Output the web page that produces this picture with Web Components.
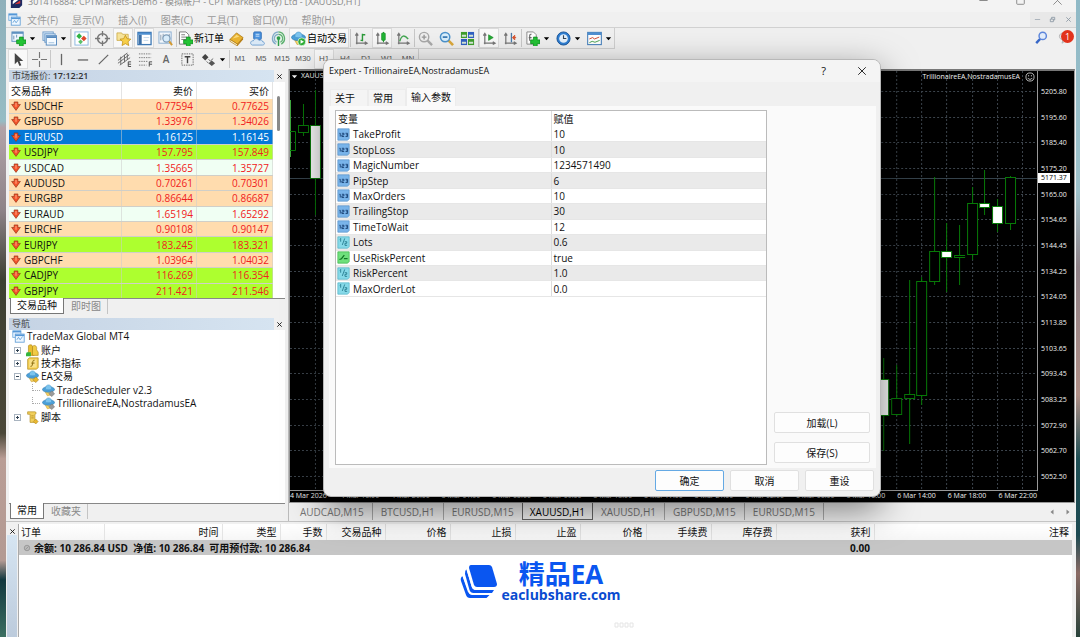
<!DOCTYPE html>
<html lang="zh-CN">
<head>
<meta charset="utf-8">
<title>XAUUSD,H1</title>
<style>
html,body{margin:0;height:100%}
body{font-family:"Open Sans","Noto Sans CJK SC",sans-serif;font-size:10px;line-height:14px;color:#111;overflow-x:hidden}
</style>
</head>
<body>
<mt-desktop></mt-desktop>
<script>
const RESET = `*{box-sizing:border-box}
button{font:inherit;color:inherit;background:none;border:0;padding:0;margin:0;cursor:default;white-space:nowrap}
a{color:inherit;text-decoration:none}
table{border-collapse:collapse;border-spacing:0}
td,th{padding:0;font-weight:inherit;text-align:left;white-space:nowrap}
`;
function component(name, css, html, setup) {
  const template = document.createElement('template');
  customElements.define(name, class extends HTMLElement {
    connectedCallback() {
      if (this.shadowRoot) return;
      const root = this.attachShadow({ mode: 'open' });
      template.innerHTML = `<style>${RESET}${css}</style>${typeof html === 'function' ? html(this) : html}`;
      root.append(template.content.cloneNode(true));
      if (setup) setup(this, root);
    }
  });
}

/* ---------- icons, all on a 16 x 16 grid ---------- */
const axes = '<path d="M3 14V3M1.500 5 3 2.500 4.500 5M2 13h11M11.500 11.500 14 13l-2.500 1.500" fill="none" stroke="#777" stroke-width="1.300"/>';
const plus = '<path d="M9 6.500h4v3h3v4h-3v3H9v-3H6v-4h3z" fill="#23c335" stroke="#0c8a1d" stroke-width=".8"/>';
const hat = '<path d="M3.500 9l3 5.500 5-1 1.500-5z" fill="#f2cf62" stroke="#c79b2c" stroke-width=".6"/><ellipse cx="8" cy="6.800" rx="7.500" ry="3.500" fill="#4a9fd8" stroke="#2f78ad" stroke-width=".6"/><path d="M4 6C4-.5 12-.5 12 6 10.500 7.600 5.500 7.600 4 6z" fill="#7cc4ee" stroke="#3b8cc4" stroke-width=".6"/>';
const ICONS = {
  app: '<path d="M2 3h12v9l-3 3H2z" fill="#1d2a62"/><path d="M4 8c3-5 7-4 8-2-3 0-4 2-8 5z" fill="#fff"/><path d="M6 11l6-4v3z" fill="#d33"/>',
  windows: '<rect x="1" y="1" width="10" height="8" fill="#eaf5ff" stroke="#68a7dd"/><path d="M1 2h10" stroke="#5496d6" stroke-width="2"/><rect x="4" y="5" width="11" height="10" fill="#eef7ff" stroke="#5b9bd5"/><path d="M4 6.500h11" stroke="#5496d6" stroke-width="2"/><path d="M6 12l2-3 2 3 3-4" fill="none" stroke="#5b9bd5"/>',
  newchart: '<rect x="1" y="1" width="12" height="10" fill="#eef6ff" stroke="#5d90c0"/><path d="M1 2h12" stroke="#5d90c0" stroke-width="2"/><path d="M3 5v4M6 4v3" stroke="#6b8fb2"/>' + plus,
  profiles: '<rect x="1" y="1" width="11" height="9" fill="#dcecfb" stroke="#6f9cc8"/><rect x="3" y="3" width="11" height="9" fill="#dcecfb" stroke="#6f9cc8"/><rect x="4.500" y="5" width="11" height="10" fill="#f6fbff" stroke="#5488bd"/><path d="M5 6.500h10" stroke="#5488bd" stroke-width="2"/><path d="M7 12.500h6" stroke="#9dbedd"/>',
  market: '<rect x="1" y="1" width="14" height="14" fill="#fff" stroke="#8ab7e0"/><path d="M5.500 2.500l3 3-3 3-3-3z" fill="#2fb344"/><path d="M10.500 5l3 3-3 3-3-3z" fill="#e0482c"/><path d="M7 9l2.500 2.500L7 14l-2.500-2.500z" fill="#5cc06b"/>',
  target: '<circle cx="8" cy="8" r="5.200" fill="none" stroke="#777" stroke-width="1.600"/><path d="M8 0v5.500M8 10.500V16M0 8h5.500M10.500 8H16" stroke="#777" stroke-width="1.400"/>',
  star: '<path d="M1 2h5l1 1.500h6V10H1z" fill="#f6e39a" stroke="#c9a53d" stroke-width=".8"/><path d="M10 4.500l1.800 3.700 4 .5-3 2.800.8 4-3.600-2-3.600 2 .8-4-3-2.800 4-.5z" fill="#f7cf4a" stroke="#c08f16" stroke-width=".8"/>',
  nav: '<rect x="1" y="1.500" width="14" height="13" fill="#fff" stroke="#3f79b4" stroke-width="1.400"/><path d="M1 3h14" stroke="#4d8fd0" stroke-width="2"/><rect x="2" y="4" width="3" height="10" fill="#3b6ea5"/><path d="M7 7h6M7 10h5" stroke="#c4d8ea"/>',
  tester: '<rect x="1" y="1" width="13" height="12" fill="#f3f8fd" stroke="#88acd0"/><path d="M3 4v6M5.500 3v5M12 3v5" stroke="#8a9bad"/><circle cx="9" cy="8" r="3.800" fill="#d8ecfa" stroke="#7d9cb8" stroke-width="1.300"/><path d="M12 11l3 4" stroke="#d39a33" stroke-width="2.200"/>',
  order: '<path d="M1.500 1h7l3 3v10h-10z" fill="#fff" stroke="#777"/><path d="M3.500 4h4M3.500 6.500h6M3.500 9h5" stroke="#777"/>' + plus,
  book: '<path d="M1 9l7-7 7 5-6 7z" fill="#e9b22f" stroke="#a9740c" stroke-width=".8"/><path d="M1 9l8 5v2l-8-5z" fill="#fff3cc" stroke="#a9740c" stroke-width=".7"/><path d="M9 14l6-7v2l-6 7z" fill="#b77d13"/><path d="M4 8l4-4 3 2z" fill="#f9d97a"/>',
  cloud: '<rect x="4" y="1" width="8" height="8" rx="1" fill="#4a93e0" stroke="#2c6bb5"/><path d="M6 3.500h4M6 5.500h4" stroke="#cfe4f8"/><path d="M2.500 15c-3-1-2-5 1-4.500 1-3 5-3 6-.5 2-1 4 0 4 1.500 3 .5 2 3.500 0 3.500z" fill="#d9e8f6" stroke="#6f9fd0"/>',
  signal: '<circle cx="8" cy="8" r="7" fill="#e5f1e9"/><path d="M8 1a7 7 0 0 0-3 13M8 3.500a4.500 4.500 0 0 0-2 8.500" fill="none" stroke="#80a9c9" stroke-width="1.300"/><path d="M8 1a7 7 0 0 1 3 13M8 3.500a4.500 4.500 0 0 1 2 8.500" fill="none" stroke="#5cb06e" stroke-width="1.300"/><circle cx="8" cy="7.500" r="2" fill="#2f9c49"/><path d="M8 8v8" stroke="#2f9c49" stroke-width="1.500"/>',
  auto: hat + '<circle cx="11.500" cy="11.500" r="4.200" fill="#2fae38" stroke="#fff" stroke-width=".7"/><path d="M10.200 9.300l3.600 2.200-3.600 2.200z" fill="#fff"/>',
  bars: axes + '<path d="M9 3v8M9 4h3M7 10h2" stroke="#2c9b3b" stroke-width="1.500"/>',
  candles: axes + '<path d="M9 1v11" stroke="#148a22"/><rect x="7" y="2" width="4" height="8" rx="1" fill="#21b534" stroke="#148a22" stroke-width=".6"/>',
  line: axes + '<path d="M4 11C6 4 9 4 13 8.500" fill="none" stroke="#43a651" stroke-width="1.500"/>',
  zoomin: '<path d="M10 10l5 5" stroke="#aaa" stroke-width="2.500"/><circle cx="6.500" cy="6.500" r="5" fill="#efefef" stroke="#a8a8a8" stroke-width="1.500"/><path d="M6.500 4v5M4 6.500h5" stroke="#999" stroke-width="1.500"/>',
  zoomout: '<path d="M10 10l5 5" stroke="#dba83b" stroke-width="2.800"/><circle cx="6.500" cy="6.500" r="5" fill="#d9effc" stroke="#4c93cc" stroke-width="1.600"/><path d="M4 6.500h5" stroke="#2c6fae" stroke-width="1.700"/>',
  tiles: '<rect x="1" y="1" width="6.500" height="6.500" fill="#3f9e2c"/><rect x="8.500" y="1" width="6.500" height="6.500" fill="#2f5fc2"/><rect x="1" y="8.500" width="6.500" height="6.500" fill="#2f5fc2"/><rect x="8.500" y="8.500" width="6.500" height="6.500" fill="#3f9e2c"/><path d="M2 5h4.500M9.500 5H14M2 12.500h4.500M9.500 12.500H14" stroke="#d5e6d8" stroke-width="2"/>',
  scroll: axes + '<path d="M7 4v6l5-3z" fill="#25ab36" stroke="#14861f" stroke-width=".6"/>',
  shift: axes + '<path d="M9 2v10" stroke="#4b7ba8" stroke-width="1.400"/><path d="M14 7h-3M12.500 4.500 10 7l2.500 2.500z" fill="#d8552f" stroke="#d8552f"/>',
  indicator: '<path d="M2 1h7l3 3v10H2z" fill="#fff" stroke="#8a8a8a"/><path d="M7 3.500c-2-.5-2 1-2 3v4M4 7h3" fill="none" stroke="#666" stroke-width="1.200"/>' + plus,
  clock: '<circle cx="8" cy="8" r="7" fill="#2f7fd3" stroke="#1b5599"/><circle cx="8" cy="8" r="4.600" fill="#e6f2fc"/><path d="M8 4.500V8h3" fill="none" stroke="#345" stroke-width="1.200"/>',
  template: '<rect x=".7" y="1.500" width="14.600" height="13" fill="#fff" stroke="#4f86bf" stroke-width="1.200"/><path d="M1 3h14" stroke="#4f90d2" stroke-width="2.500"/><path d="M2.500 8.500 6 7l2 1.500 5-2" stroke="#d0452d" fill="none"/><path d="M2.500 12.500l3-1.500 3 1 5-2" stroke="#45a14c" fill="none"/>',
  cursor: '<path d="M4 1v12l3-3 2 5 2-1-2-4.500h4z" fill="#444"/>',
  cross: '<path d="M8 0v6.500M8 9.500V16M0 8h6.500M9.500 8H16" stroke="#777" stroke-width="1.200"/>',
  vline: '<path d="M8 2v12" stroke="#666" stroke-width="1.400"/>',
  hline: '<path d="M3 8.500h11" stroke="#666" stroke-width="1.400"/>',
  trend: '<path d="M3 13 13 3" stroke="#666" stroke-width="1.300"/>',
  channel: '<path d="M1 9l10-8M1 12 13 3M3 14l11-8M4 5v8M8 3v8M11 2v6" stroke="#666"/><path d="M15 10.500h-3v5h3M12 13h3" stroke="#444" fill="none"/>',
  fibo: '<path d="M1 2h13M1 6h13M1 10h9M1 14h8" stroke="#777" stroke-dasharray="1.500 1"/><path d="M15 10.500h-3v5M12 13h3" stroke="#444" fill="none"/>',
  label: '<rect x="2" y="2" width="12" height="12" fill="none" stroke="#666" stroke-dasharray="1.500 1"/><path d="M5 5h6M8 5v7" stroke="#444" stroke-width="1.500"/>',
  arrows: '<path d="M4.500 2 8 5.500 4.500 9 1 5.500z" fill="#444"/><path d="M8 8l2 1.500L13 7M6 10l2 2" fill="none" stroke="#666"/><path d="M11.500 9 15 12l-3.500 3L8 12z" fill="#555"/>',
  search: '<path d="M6.500 9.500 1.500 15" stroke="#3767c7" stroke-width="3"/><circle cx="9.500" cy="6" r="4.500" fill="#e2ecfa" stroke="#5d86db" stroke-width="1.800"/>',
  chat: '<path d="M8 2c9 0 8 9 2 9.500L5 15l1-4C0 10 0 2 8 2z" fill="#e3e3e8" stroke="#aaa"/>',
  down: '<path d="M5 1.500h6v4h4L8 15 1 5.500h4z" fill="#f3532b" stroke="#8e2c12"/><path d="M7 3h2v6H7z" fill="#ff9b75"/>',
  accounts: '<path d="M3 2c2-2 5-1 5 1v5l2 2v4H3z" fill="#e8bd2f" stroke="#a67c10" stroke-width=".7"/><path d="M8 3c3-3 6 0 5 4l2 3v4H8z" fill="#f1cb45" stroke="#a67c10" stroke-width=".7"/><path d="M1 10h5v5H0v-3z" fill="#33b53c"/>',
  fx: '<path d="M2 3l2-2h11v12l-2 2H2z" fill="#f3cd4e" stroke="#b08a1e" stroke-width=".8"/><rect x="4" y="3" width="9" height="10" fill="#f9e18a"/><path d="M10.500 4C8 3.500 8.500 6 8 8.500S7 12 5.500 11.500M6.500 7.500h4" stroke="#8a6a0c" fill="none" stroke-width="1.200"/>',
  hat: hat + '<path d="M12 8.500l3.500 3.500-3.500 3.500L8.500 12z" fill="#e9b832" stroke="#a97f14" stroke-width=".7"/>',
  hatgrey: hat + '<path d="M12 8.500l3.500 3.500-3.500 3.500L8.500 12z" fill="#9a9a9a" stroke="#777" stroke-width=".7"/>',
  script: '<path d="M2 1h9c2 0 2 3 0 3v7h2v3H5V4H2z" fill="#f1cf5b" stroke="#b08a1e" stroke-width=".8"/><path d="M6.500 6h3M6.500 8.500h3" stroke="#b08a1e"/><path d="M12 10l3 3-3 3-3-3z" fill="#e9b832" stroke="#a97f14" stroke-width=".6"/>',
  int: '<path d="M1 1h14v12l-2 2H1z" fill="#79b4ea" stroke="#5590c8" stroke-width=".8"/><path d="M3 6.500h1v4M6 6.500h2.500v2H6v2h2.800M10.500 6.500H13v4h-2.500M11 8.500h2" stroke="#163f72" fill="none" stroke-width="1.100"/>',
  double: '<path d="M1 1h14v12l-2 2H1z" fill="#86d9e8" stroke="#4bb2c6" stroke-width=".8"/><path d="M3.500 4l1-1v4M6.500 11l3-8M9.500 7h2.500v2H9.800v2.500H12.500" stroke="#1d7487" fill="none"/>',
  bool: '<path d="M1 1h14v12l-2 2H1z" fill="#6fe07c" stroke="#36b146" stroke-width=".8"/><path d="M3 10.500l2.500-1L9 5M8.500 9.500H13" stroke="#0f7423" fill="none" stroke-width="1.500"/>',
  smile: '<circle cx="8" cy="8" r="6.500" fill="none" stroke="#ddd" stroke-width="1.300"/><path d="M4.500 9.500c1 3 6 3 7 0" fill="none" stroke="#ddd" stroke-width="1.300"/><path d="M5.800 5v2M10.200 5v2" stroke="#ddd" stroke-width="1.400"/>',
  noentry: '<circle cx="8" cy="8" r="5.500" fill="#b8b8b8" stroke="#888" stroke-width="1.300"/><path d="M5 11l6-6" stroke="#888" stroke-width="1.300"/>',
  close: '<path d="M3 3l10 10M13 3 3 13" stroke="currentColor" stroke-width="2"/>',
  thinclose: '<path d="M2 2l12 12M14 2 2 14" stroke="currentColor" stroke-width="1.400"/>',
  min: '<path d="M2 8h12" stroke="currentColor" stroke-width="1.500"/>',
  max: '<rect x="2.500" y="2.500" width="11" height="11" rx="1" fill="none" stroke="currentColor" stroke-width="1.400"/>',
  restore: '<path d="M3 7h7v6H3zM6 7V3h7v6h-3" fill="none" stroke="currentColor" stroke-width="2"/>',
  caret: '<path d="M2 5h12l-6 7z" fill="currentColor"/>',
  left: '<path d="M11 3v10L5 8z" fill="currentColor"/>',
  right: '<path d="M5 3v10l6-5z" fill="currentColor"/>'
};
component('mt-icon',
  ':host{display:inline-block;flex:none;width:var(--size,15px);height:var(--size,15px)}svg{display:block;width:100%;height:100%}',
  el => `<svg viewBox="0 0 16 16" aria-hidden="true">${ICONS[el.getAttribute('name')] || ''}</svg>`);

/* ---------- toolbar pieces ---------- */
component('tool-button', `
:host{display:block;flex:none}
button{display:flex;align-items:center;justify-content:center;gap:2px;min-width:20px;height:20px}
:host([menu]) button{width:30px;gap:3px}
:host([labelled]) button{gap:1px;padding:0 1px;font-size:10px;color:#000}
:host([pressed]) button{background:#f9f9f9;border:1px solid #dcdcdc}
:host([period]) button{font:8px/10px "Liberation Sans",sans-serif;color:#555}
.caret{--size:7px;color:#000}`,
  el => `<button type="button" aria-label="${el.getAttribute('icon') || ''}">${el.getAttribute('icon') ? `<mt-icon name="${el.getAttribute('icon')}"></mt-icon>` : ''}<slot></slot>${el.hasAttribute('menu') ? '<mt-icon class="caret" name="caret"></mt-icon>' : ''}</button>`,
  (el, root) => { if (!el.getAttribute('icon')) root.querySelector('button').removeAttribute('aria-label'); });
component('tool-sep', ':host{display:block;flex:none;width:1px;height:18px;margin-right:-1px;background:#c8c8c8}', '');

const T = (icon, flags = '', text = '') => `<tool-button icon="${icon}" ${flags}>${text}</tool-button>`;
const S = '<tool-sep></tool-sep>';
component('mt-toolbars', `
:host{display:flex;justify-content:space-between;align-items:flex-start;background:#f0f0f0;height:41px}
.rows{display:flex;flex-direction:column;align-items:flex-start}
.row{display:flex;gap:1px;align-items:center;height:21px;padding-left:2px;border-bottom:1px solid #cfcfcf;border-right:1px solid #cfcfcf}
.row+.row{height:20px;border-bottom:0}
.letter{font-size:10px;font-weight:600;color:#666}
.status{display:flex;gap:10px;padding:3px 5px 0 0;--size:13px}
.status button{position:relative;display:block}
.badge{position:absolute;left:3px;top:-1px;width:13px;height:13px;border-radius:50%;background:#e2331c;color:#fff;font-size:9px;line-height:13px;text-align:center}`,
  `<div class="rows">
  <div class="row">${T('newchart', 'menu')}${T('profiles', 'menu')}${S}${T('market', 'pressed')}${T('target')}${T('star', 'pressed')}${T('nav', 'pressed')}${T('tester')}${S}${T('order', 'labelled', '新订单')}${T('book')}${T('cloud')}${T('signal')}${T('auto', 'labelled pressed', '自动交易')}${S}${T('bars')}${T('candles', 'pressed')}${T('line')}${S}${T('zoomin')}${T('zoomout')}${T('tiles')}${S}${T('scroll', 'pressed')}${T('shift')}${S}${T('indicator', 'menu')}${T('clock', 'menu')}${T('template', 'menu')}</div>
  <div class="row">${T('cursor', 'pressed')}${T('cross')}${S}${T('vline')}${T('hline')}${T('trend')}${T('channel')}${T('fibo')}<tool-button><span class="letter">A</span></tool-button>${T('label')}${T('arrows', 'menu')}${S}${['M1', 'M5', 'M15', 'M30', 'H1', 'H4', 'D1', 'W1', 'MN'].map(p => `<tool-button period ${p === 'H1' ? 'pressed' : ''}>${p}</tool-button>`).join('')}</div>
</div>
<div class="status"><button type="button" aria-label="search"><mt-icon name="search"></mt-icon></button><button type="button"><mt-icon name="chat"></mt-icon><span class="badge">1</span></button></div>`);

component('mt-titlebar', `
:host{display:flex;align-items:flex-end;height:12px;overflow:hidden;background:#f3f3f3;color:#8a8a8a}
.bar{flex:1;display:flex;align-items:center;height:21px;padding:0 13px 0 3px;gap:4px}
.title{flex:1;white-space:nowrap;font-size:9px}
.ctl{display:flex;gap:26px;--size:11px}`,
  `<div class="bar"><mt-icon name="app"></mt-icon><span class="title">301416884: CPTMarkets-Demo - 模拟帐户 - CPT Markets (Pty) Ltd - [XAUUSD,H1]</span>
  <span class="ctl"><button type="button" aria-label="minimize"><mt-icon name="min"></mt-icon></button><button type="button" aria-label="maximize"><mt-icon name="max"></mt-icon></button><button type="button" aria-label="close"><mt-icon name="thinclose"></mt-icon></button></span></div>`);

component('mt-menubar', `
:host{display:flex;align-items:center;height:16px;background:#f0f0f0;border-bottom:1px solid #d2d2d2;color:#999;padding-left:2px}
nav{flex:1;display:flex;gap:14px;margin-left:6px;white-space:nowrap}
mt-icon{--size:13px}
.mdi{display:flex;align-self:stretch;align-items:center;justify-content:space-around;width:46px;background:#e8e8e8;color:#8d99a5}
.mdi mt-icon{--size:7px}`,
  `<mt-icon name="windows"></mt-icon><nav>${['文件(F)', '显示(V)', '插入(I)', '图表(C)', '工具(T)', '窗口(W)', '帮助(H)'].map(t => `<a href="#">${t}</a>`).join('')}</nav>
  <div class="mdi"><mt-icon name="min"></mt-icon><mt-icon name="restore"></mt-icon><mt-icon name="close"></mt-icon></div>`);

/* ---------- docked panels ---------- */
component('dock-panel', `
:host{display:flex;flex-direction:column}
header{display:flex;height:12px;align-items:center}
.title{flex:1;height:12px;line-height:12px;padding-left:3px;background:linear-gradient(90deg,#c5d3e4,#d6e4f1);color:#444;white-space:nowrap;font-size:9px}
.title b{font-weight:600;color:#333}
header button{width:11px;height:12px;display:grid;place-items:center}
header mt-icon{--size:7px}
.body{flex:1;background:#fff;border-bottom:1px solid #888;overflow:hidden}
footer{display:flex;height:17px;align-items:flex-start}
footer button{height:15px;padding:0 6px;color:#888;border-right:1px solid #c4c4c4;line-height:13px}
footer button:first-child{background:#fff;color:#111;border:1px solid #777;border-top:0;margin:-1px 1px 0 1px;height:16px;line-height:15px}`,
  el => `<header><div class="title">${el.getAttribute('heading')}</div><button type="button" aria-label="close"><mt-icon name="close"></mt-icon></button></header>
  <div class="body"><slot></slot></div>
  <footer>${el.getAttribute('tabs').split('|').map(t => `<button type="button">${t}</button>`).join('')}</footer>`);

const QUOTES = [
  ['USDCHF', '0.77594', '0.77625', 'o'], ['GBPUSD', '1.33976', '1.34026', 'o'], ['EURUSD', '1.16125', '1.16145', 's'],
  ['USDJPY', '157.795', '157.849', 'g'], ['USDCAD', '1.35665', '1.35727', 'm'], ['AUDUSD', '0.70261', '0.70301', 'o'],
  ['EURGBP', '0.86644', '0.86687', 'o'], ['EURAUD', '1.65194', '1.65292', 'm'], ['EURCHF', '0.90108', '0.90147', 'o'],
  ['EURJPY', '183.245', '183.321', 'g'], ['GBPCHF', '1.03964', '1.04032', 'o'], ['CADJPY', '116.269', '116.354', 'g'],
  ['GBPJPY', '211.421', '211.546', 'g']];
component('market-watch', `
:host{display:flex;justify-content:space-between;height:100%}
table{flex:1;height:217px;table-layout:fixed}
th,td{border-right:1px solid #ccc8;line-height:12px;padding:0 3px}
th:first-child,td:first-child{padding-left:2px}
th:not(:first-child),td:not(:first-child){text-align:right}
thead tr{height:17px}
tbody td{border-bottom:1px solid #d0cfc8;color:#f02020}
tbody td:first-child{color:#111}
.o{background:#ffdcae}.g{background:#adff2f}.m{background:#f0fff3}.s{background:#0478d7}
.s td,.s td:first-child{color:#fff}
.sym{display:flex;align-items:center;gap:3px}
.sym mt-icon{--size:10px}
.track{width:12px;padding:14px 4px 0}
.thumb{width:3px;height:35px;background:#8a8a8a;border-radius:2px}`,
  `<table><colgroup><col><col style="width:75px"><col style="width:76px"></colgroup><thead><tr><th>交易品种</th><th>卖价</th><th>买价</th></tr></thead><tbody>${QUOTES.map(q => `<tr class="${q[3]}"><td><span class="sym"><mt-icon name="down"></mt-icon>${q[0]}</span></td><td>${q[1]}</td><td>${q[2]}</td></tr>`).join('')}</tbody></table><div class="track"><div class="thumb"></div></div>`);

component('nav-tree', `
:host{display:block}
ul{list-style:none;margin:0;padding:0 0 0 3px;display:grid;grid-auto-rows:1fr;height:94px}
li{display:flex;align-items:center;gap:2px;line-height:13px;white-space:nowrap}
mt-icon{--size:13px}
.box{width:7px;height:7px;border:1px solid #a9b4c0;margin:0 3px 0 2px;display:grid;place-items:center;background:#fff;position:relative;color:#345}
.box::before{content:"";width:3px;height:1px;background:currentColor}
.plus::after{content:"";position:absolute;left:2px;top:1px;width:1px;height:3px;background:currentColor}
.branch{width:8px;height:7px;margin:-6px 0 0 20px;border-left:1px dotted #aaa;border-bottom:1px dotted #aaa}`,
  `<ul><li><mt-icon name="windows"></mt-icon>TradeMax Global MT4</li>
  <li><span class="box plus"></span><mt-icon name="accounts"></mt-icon>账户</li>
  <li><span class="box plus"></span><mt-icon name="fx"></mt-icon>技术指标</li>
  <li><span class="box"></span><mt-icon name="hat"></mt-icon>EA交易</li>
  <li><span class="branch"></span><mt-icon name="hatgrey"></mt-icon>TradeScheduler v2.3</li>
  <li><span class="branch"></span><mt-icon name="hatgrey"></mt-icon>TrillionaireEA,NostradamusEA</li>
  <li><span class="box plus"></span><mt-icon name="script"></mt-icon>脚本</li></ul>`);

/* ---------- price chart ---------- */
/* x, wick top, body top, body bottom, wick bottom, filled */
const CANDLES = [
  [13, 33, 54, 61, 65, 0], [25, 19, 54, 107, 144, 1], [594, 287, 308, 344, 380, 1], [607, 294, 327, 343, 345, 0],
  [620, 209, 323, 327, 373, 0], [632, 206, 210, 324, 334, 0], [645, 106, 180, 210, 214, 0], [657, 152, 180, 186, 221, 1],
  [670, 154, 184, 186, 214, 0], [683, 116, 132, 183, 189, 0], [695, 99, 132, 136, 144, 1], [708, 128, 135, 152, 161, 1],
  [721, 105, 106, 152, 159, 0]];
function chartDrawing() {
  let out = '<g stroke="#3c444c" stroke-dasharray="2 2">';
  for (let i = 0; i < 29; i++) out += `<path d="M${Math.round(25 + i * 25.29) + .5} 0V419"/>`;
  for (let i = 0; i < 16; i++) out += `<path d="M0 ${Math.round(20 + i * 25.67) + .5}H748"/>`;
  out += '</g><path d="M0 107.500H748" stroke="#35424b"/><g stroke="#077a07">';
  out += '<path d="M.5 29V86" stroke="#3fae3f"/><path d="M0 60.500h5.500v19H0" fill="none"/><path d="M33.500 100v16"/>';
  for (const [x, t, a, b, l, f] of CANDLES)
    out += `<path d="M${x + .5} ${t}V${l}"/><rect x="${x - 4.5}" y="${a + .5}" width="10" height="${b - a}" fill="${f ? '#fff' : '#000'}"/>`;
  return out + '</g>';
}
const PRICES = ['5205.80', '5195.60', '5185.40', '5175.20', '5165.00', '5154.65', '5144.45', '5134.25', '5124.05', '5113.85', '5103.65', '5093.45', '5083.25', '5072.90', '5062.70', '5052.50'];
const TIMES = ['4 Mar 2026', '4 Mar 16:00', '4 Mar 20:00', '5 Mar 01:00', '5 Mar 05:00', '5 Mar 09:00', '5 Mar 13:00', '5 Mar 17:00', '5 Mar 21:00', '6 Mar 02:00', '6 Mar 06:00', '6 Mar 10:00', '6 Mar 14:00', '6 Mar 18:00', '6 Mar 22:00'];
component('price-chart', `
:host{display:grid;grid-template-columns:minmax(0,1fr) 36px;grid-template-rows:420px 11px;background:#000;color:#f0f0f0;border:1px solid #999;border-top:2px solid #777;border-bottom:0;font-size:7px;line-height:10px}
.plot{position:relative;border-right:1px solid #999;border-bottom:1px solid #999}
svg{display:block;width:100%;height:100%}
.name,.ea{position:absolute;top:0;display:flex;align-items:center;gap:3px;white-space:nowrap}
.name{left:1px}.name mt-icon{--size:7px}
.ea{right:2px;top:1px;gap:5px}.ea mt-icon{--size:10px}
.prices{position:relative;display:grid;grid-auto-rows:1fr;padding:8px 0 1px 3px;align-items:center}
.now{position:absolute;left:0;top:102px;padding:0 0 0 3px;width:32px;background:#fff;color:#000}
.times{grid-column:1/-1;display:grid;grid-template-columns:repeat(15,minmax(0,1fr));margin-right:25px;white-space:nowrap}`,
  `<div class="plot"><svg viewBox="0 0 748 419" preserveAspectRatio="none">${chartDrawing()}</svg>
  <span class="name"><mt-icon name="caret"></mt-icon>XAUUSD,H1</span><span class="ea">TrillionaireEA,NostradamusEA<mt-icon name="smile"></mt-icon></span></div>
  <div class="prices">${PRICES.map(p => `<span>${p}</span>`).join('')}<span class="now">5171.37</span></div>
  <div class="times">${TIMES.map(t => `<span>${t}</span>`).join('')}</div>`);

component('chart-tabs', `
:host{display:flex;justify-content:space-between;height:19px;background:#f0f0f0;border-top:1px solid #999;padding:0 3px}
.tabs{display:flex;align-items:flex-start}
button{height:17px;padding:0 8px;color:#777;border-right:1px solid #aaa}
button.active{background:#f3f3f3;color:#000;border:1px solid #666;border-top:0;margin-left:-1px;padding:1px 7px 0}
.arrows{display:flex;gap:8px;align-items:center;color:#888;--size:8px}`,
  `<div class="tabs">${['AUDCAD,M15', 'BTCUSD,H1', 'EURUSD,M15', '*XAUUSD,H1', 'XAUUSD,H1', 'GBPUSD,M15', 'EURUSD,M15'].map(t => `<button type="button" class="${t[0] === '*' ? 'active' : ''}">${t.replace('*', '')}</button>`).join('')}</div>
  <div class="arrows"><mt-icon name="left"></mt-icon><mt-icon name="right"></mt-icon></div>`);

/* ---------- terminal ---------- */
const COLUMNS = [['订单', 85], ['时间', 118], ['类型', 58], ['手数', 46], ['交易品种', 59], ['价格', 65], ['止损', 65], ['止盈', 65], ['价格', 66], ['手续费', 65], ['库存费', 65], ['获利', 98], ['注释', 0]];
component('mt-terminal', `
:host{display:grid;grid-template-columns:12px minmax(0,1fr);background:#f0f0f0;border-top:1px solid #c4c4c4;padding:2px 4px 0 0}
.side{display:flex;flex-direction:column;align-items:center}
.side button{height:11px}.side mt-icon{--size:7px}
.strip{flex:1;width:10px;background:linear-gradient(#d6e5f2,#bccbdc)}
.body{background:#fff;border-left:1px solid #aaa}
table{width:100%;table-layout:fixed}
th{height:16px;text-align:right;padding:0 3px 0 0;border-right:1px solid #e4e4e4;background:linear-gradient(#fff,#f6f6f6)}
th:first-child{text-align:left;padding-left:2px}
th:last-child{border:0}
td{height:15px;background:#c6c6c6;font-weight:700;font-size:10px;line-height:14px;text-align:right;padding-right:4px;white-space:pre}
td:first-child{text-align:left;padding-left:4px}
td span{display:flex;align-items:center;gap:3px}
td mt-icon{--size:8px}
.brand{display:flex;justify-content:center;align-items:center;gap:4px;margin:5px 10px 0 0;color:#0a56f0}
.brand svg{width:37px;height:34px}
.brand div{display:flex;flex-direction:column;align-items:center}
.brand strong{font-size:26px;line-height:28px}
.brand a{font-size:14px;line-height:14px;font-weight:700;color:#0a4bd0}
.mark{display:block;width:20px;height:6px;margin:20px auto 0;position:relative;left:78px;opacity:.5}`,
  `<div class="side"><button type="button" aria-label="close"><mt-icon name="close"></mt-icon></button><div class="strip"></div></div>
  <div class="body"><table><colgroup>${COLUMNS.map(c => `<col${c[1] ? ` style="width:${c[1]}px"` : ''}>`).join('')}</colgroup>
  <thead><tr>${COLUMNS.map(c => `<th>${c[0]}</th>`).join('')}</tr></thead>
  <tbody><tr><td colspan="5"><span><mt-icon name="noentry"></mt-icon>余额: 10 286.84 USD  净值: 10 286.84  可用预付款: 10 286.84</span></td><td colspan="7">0.00</td><td></td></tr></tbody></table>
  <div class="brand"><svg viewBox="0 0 37 34" aria-hidden="true"><g fill="#0a56f0"><path d="M11 1h18q2 0 3 2l5 17q0 3-3 3H17q-2 0-3-2L9 4q0-3 2-3z"/><path d="M6.500 5l5 17q1 4 4.500 4h18l-2 3H13.500q-3 0-4-3L5 10q-.5-3 1.500-5z"/><path d="M2.500 12l6 15.500q1 3.500 4 3.500h17l-3 3H10q-3 0-4-3L1 17q-1-3 1.500-5z"/></g><path d="M6.800 4.500l5.500 18q.8 2.700 3.700 2.700h20M3 11.500l5.500 16q1 2.300 3.500 2.300h19" fill="none" stroke="#fff" stroke-width="1.300"/></svg><div><strong>精品EA</strong><a href="#">eaclubshare.com</a></div></div>
  <svg class="mark" viewBox="0 0 20 6" aria-hidden="true"><path d="M1 1h3v4H1zM6 1h3v4H6zM11 1h3v4h-3zM16 1h3v4h-3z" fill="none" stroke="#ccc"/></svg></div>`);

/* ---------- expert properties dialog ---------- */
const INPUTS = [['int', 'TakeProfit', '10'], ['int', 'StopLoss', '10'], ['int', 'MagicNumber', '1234571490'], ['int', 'PipStep', '6'], ['int', 'MaxOrders', '10'], ['int', 'TrailingStop', '30'], ['int', 'TimeToWait', '12'], ['double', 'Lots', '0.6'], ['bool', 'UseRiskPercent', 'true'], ['double', 'RiskPercent', '1.0'], ['double', 'MaxOrderLot', '0.0']];
component('expert-dialog', `
:host{display:flex;flex-direction:column;background:#f0f0f0;border:1px solid #b8b8b8;border-radius:8px;overflow:hidden;box-shadow:0 12px 36px rgba(0,0,0,.5)}
header{display:flex;align-items:center;height:22px;background:#f4f4f4;padding:0 13px 0 5px}
h1{flex:1;margin:0;font:inherit;font-size:9px;white-space:nowrap}
header button{font-size:11px;margin-left:31px}
header mt-icon{--size:10px;display:block}
.tabs{display:flex;align-items:flex-end;height:24px;padding-left:6px}
.tabs button{width:38px;height:17px;background:#f4f4f4;border:1px solid #ececec;border-bottom:0;text-align:left;padding-left:4px}
.tabs button.active{width:50px;height:19px;background:#fafafa}
.page{flex:1;display:flex;gap:7px;margin:0 4px 0 5px;padding:4px 6px 3px 6px;background:#fafafa}
.list{flex:1;background:#fff;border:1px solid #bbb}
table{width:100%;height:186px;table-layout:fixed}
thead tr{height:16px}
td,th{line-height:12px;padding:0 2px}
td{border-bottom:1px solid #e6e6e6}
th:first-child,td:first-child{border-right:1px solid #ddd}
tbody tr:nth-child(even){background:#eaeaea}
td span{display:flex;align-items:center;gap:3px;margin-left:-1px}
td mt-icon{--size:13px}
.side{width:96px;display:flex;flex-direction:column;justify-content:flex-end;gap:9px;padding-bottom:2px}
.btn{display:block;height:21px;background:#fdfdfd;border:1px solid #e0e0e0;border-radius:2px}
footer{display:flex;justify-content:flex-end;gap:6px;padding:2px 6px 5px}
footer .btn{width:69px}
.btn.primary{border-color:#64a9e4}`,
  `<header><h1>Expert - TrillionaireEA,NostradamusEA</h1><button type="button">?</button><button type="button" aria-label="close"><mt-icon name="thinclose"></mt-icon></button></header>
  <div class="tabs"><button type="button">关于</button><button type="button">常用</button><button type="button" class="active">输入参数</button></div>
  <div class="page"><div class="list"><table><thead><tr><th>变量</th><th>赋值</th></tr></thead><tbody>${INPUTS.map(r => `<tr><td><span><mt-icon name="${r[0]}"></mt-icon>${r[1]}</span></td><td>${r[2]}</td></tr>`).join('')}</tbody></table></div>
  <div class="side"><button type="button" class="btn">加载(L)</button><button type="button" class="btn">保存(S)</button></div></div>
  <footer><button type="button" class="btn primary">确定</button><button type="button" class="btn">取消</button><button type="button" class="btn">重设</button></footer>`);

component('mt-desktop', `
:host{display:flex;min-height:100vh;position:relative;overflow:hidden;padding:0 4px 0 6px;
background:linear-gradient(#8fb0ba 0,#96bcc4 19%,#b3a3a8 20%,#8d8388 33%,#3c3f32 44%,#4a4738 68%,#b99d95 72%,#b39a93 88%,#12383f 91%,#3c6f61 100%) left/6px 100% no-repeat,
linear-gradient(#8fb9c6 0,#9ec2cb 30%,#8f8187 42%,#b08f86 62%,#1f4f55 72%,#1d4a52 84%,#8a6a64 90%,#28423a 100%) right/4px 100% no-repeat}
.window{flex:1;min-width:0;display:flex;flex-direction:column;background:#f0f0f0}
main{display:grid;grid-template-columns:283px minmax(0,1fr);min-height:452px}
.left{display:flex;flex-direction:column;gap:2px;padding:1px 3px 0 3px;border-right:1px solid #bbb}
.market{height:246px}.nav{flex:1}
.right{display:flex;flex-direction:column;padding-right:1px}
mt-terminal{flex:1}
expert-dialog{position:absolute;left:323px;top:59px;width:558px;height:438px}`,
  `<div class="window"><mt-titlebar></mt-titlebar><mt-menubar></mt-menubar><mt-toolbars></mt-toolbars>
  <main><div class="left"><dock-panel class="market" heading="市场报价: &lt;b&gt;17:12:21&lt;/b&gt;" tabs="交易品种|即时图"><market-watch></market-watch></dock-panel>
  <dock-panel class="nav" heading="导航" tabs="常用|收藏夹"><nav-tree></nav-tree></dock-panel></div>
  <div class="right"><price-chart></price-chart><chart-tabs></chart-tabs></div></main>
  <mt-terminal></mt-terminal></div><expert-dialog></expert-dialog>`);
</script>
</body>
</html>
